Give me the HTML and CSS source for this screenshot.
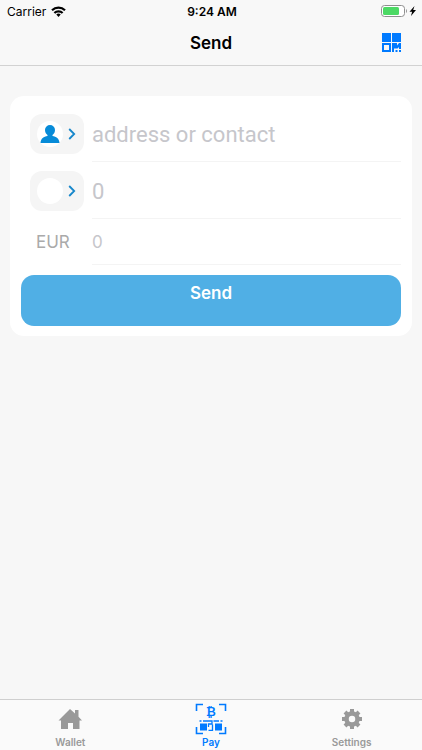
FILE: index.html
```html
<!DOCTYPE html>
<html lang="en">
<head>
<meta charset="utf-8">
<meta name="viewport" content="width=device-width, initial-scale=1">
<title>Send</title>
<link rel="stylesheet" href="styles.css">
</head>
<body>
<header class="top">
  <div class="status">
    <div class="status-side">
      <span>Carrier</span>
      <svg width="15" height="11" viewBox="0 0 15 11" aria-hidden="true">
        <g fill="none" stroke="#000" stroke-width="2.200">
          <path d="M1 4.300a9.300 9.300 0 0 1 13 0"/>
          <path d="M3.400 7a5.800 5.800 0 0 1 8.200 0"/>
        </g>
        <path d="M5.300 8.600a3.100 3.100 0 0 1 4.400 0L7.500 10.900z"/>
      </svg>
    </div>
    <span class="clock">9:24 AM</span>
    <div class="status-side status-end">
      <svg width="36" height="12" viewBox="0 0 36 12" aria-hidden="true">
        <rect x=".5" y=".5" width="23" height="11" rx="3" fill="#fff" stroke="#8f8f8f"/>
        <rect x="2" y="2" width="16" height="8" rx="1.500" fill="#4cd964"/>
        <path d="M25 4v4c1.300-.5 1.300-3.500 0-4z" fill="#8f8f8f"/>
        <path d="M33.500 1l-5 5.800h2.600L30 11l5-6h-2.800z"/>
      </svg>
    </div>
  </div>
  <div class="nav">
    <h1>Send</h1>
    <button class="scan" type="button" aria-label="Scan QR code">
      <svg width="20" height="20" viewBox="0 0 20 20" fill="#007aff">
        <path d="M0 0h9v9H0zM10 0h9v9h-9z"/>
        <path fill-rule="evenodd" d="M0 10h9v9H0zM2 12v5h5v-5z"/>
        <path d="M10 10h5v2.500l2-2.500h2v6h-2v-2l-1.500 1.500H12V19h-2zM13.500 17h2v2h-2zM17 17h2v2h-2z"/>
      </svg>
    </button>
  </div>
</header>

<main>
  <form class="card">
    <div class="row">
      <button class="pick" type="button" aria-label="Choose contact">
        <span class="avatar">
          <svg width="20" height="20" viewBox="0 0 20 20" fill="#078bd8"><path d="M10 1a5 5 0 0 1 5 5c0 2.200-1 4-2.500 5v1c3.800.8 6.500 2 7 7H.5c.5-5 3.200-6.200 7-7v-1C6 10 5 8.200 5 6a5 5 0 0 1 5-5z"/></svg>
        </span>
        <svg width="8" height="12" viewBox="0 0 8 12" fill="none" stroke="#1787cb" stroke-width="1.800"><path d="M1.200 1l5 5-5 5"/></svg>
      </button>
      <input class="field" type="text" placeholder="address or contact" aria-label="Address or contact">
    </div>
    <div class="row">
      <button class="pick" type="button" aria-label="Choose currency">
        <span class="avatar"></span>
        <svg width="8" height="12" viewBox="0 0 8 12" fill="none" stroke="#1787cb" stroke-width="1.800"><path d="M1.200 1l5 5-5 5"/></svg>
      </button>
      <input class="field" type="text" inputmode="decimal" placeholder="0" aria-label="Amount">
    </div>
    <div class="row row-small">
      <label class="unit" for="fiat">EUR</label>
      <input class="field" id="fiat" type="text" inputmode="decimal" placeholder="0">
    </div>
    <button class="send" type="submit">Send</button>
  </form>
</main>

<nav class="tabs">
  <a href="#wallet">
    <svg width="32" height="32" viewBox="0 0 32 32" fill="#999"><path d="M16 6l5 4.500V7h3.500v6.700L28 17.400h-2.500V26H19v-6h-5v6H7v-8.600H4.500z"/></svg>
    <span>Wallet</span>
  </a>
  <a class="active" href="#pay">
    <svg width="32" height="32" viewBox="0 0 32 32">
      <path d="M1.500 8V1.500H8M24 1.500h6.500V8M1.500 24v6.500H8M24 30.500h6.500V24" fill="none" stroke="#007aff" stroke-width="1.600"/>
      <path d="M5 20.500h7v7H5zM20 20.500h7v7h-7zM4.500 17.200h2v1.500h-2zM25.500 17.200h2v1.500h-2z" fill="#007aff"/>
      <path d="M8 18h9v3h-3.500v3M17.500 28v-6.500M18 27.300h-4.500M18.500 18H24" fill="none" stroke="#007aff" stroke-width="1.300"/>
      <text class="coin" x="16" y="13" text-anchor="middle">₿</text>
    </svg>
    <span>Pay</span>
  </a>
  <a href="#settings">
    <svg width="32" height="32" viewBox="0 0 32 32">
      <circle cx="16" cy="16" r="5.500" fill="none" stroke="#999" stroke-width="4.500"/>
      <path d="M16 6v4M16 22v4M6 16h4M22 16h4M9 9l2.500 2.500M20.500 20.500L23 23M23 9l-2.500 2.500M11.500 20.500L9 23" stroke="#999" stroke-width="4"/>
    </svg>
    <span>Settings</span>
  </a>
</nav>
</body>
</html>
```
FILE: styles.css
```css
* {
  box-sizing: border-box;
}

body {
  margin: 0;
  min-height: 100vh;
  display: flex;
  flex-direction: column;
  background: #f7f7f7;
  color: #000;
  font-family: Inter, "Liberation Sans", sans-serif;
}

button {
  border: 0;
  padding: 0;
  font: inherit;
  cursor: pointer;
}

svg {
  display: block;
}

.top {
  border-bottom: 1px solid #d2d2d2;
  background: #f8f8f8;
}

.status,
.nav {
  display: grid;
  grid-template-columns: 1fr auto 1fr;
  align-items: center;
}

.status {
  height: 22px;
  padding: 0 5px 0 7px;
  font-size: 12px;
}

.status-side {
  display: flex;
  align-items: center;
  gap: 5px;
}

.status-end {
  justify-content: flex-end;
}

.clock {
  font-weight: 600;
}

.nav {
  height: 43px;
  padding: 0 20px 1px;
}

h1 {
  grid-column: 2;
  margin: 0;
  font-size: 17px;
  font-weight: 600;
}

.scan {
  justify-self: end;
  background: none;
}

main {
  flex: 1;
  padding: 30px 10px;
}

.card {
  padding: 9px 11px 10px;
  border-radius: 14px;
  background: #fff;
}

.row {
  display: grid;
  grid-template-columns: 54px 1fr;
  align-items: center;
  gap: 8px;
  height: 57px;
  padding-left: 9px;
}

.pick {
  display: flex;
  align-items: center;
  gap: 5px;
  height: 40px;
  padding: 0 7px;
  border-radius: 12px;
  background: #f5f5f5;
}

.avatar {
  display: grid;
  place-items: center;
  width: 26px;
  height: 26px;
  border-radius: 50%;
  background: #fff;
}

.field {
  width: 100%;
  height: 100%;
  padding: 2px 0 0;
  border: 0;
  border-bottom: 1px solid #f4f4f4;
  border-radius: 0;
  outline: 0;
  background: none;
  font-family: Roboto, "Liberation Sans", sans-serif;
  font-size: 22px;
}

.field::placeholder {
  color: #c6c6cb;
  opacity: 1;
}

.row-small {
  height: 46px;
}

.row-small .field {
  padding: 0;
  font-family: Inter, "Liberation Sans", sans-serif;
  font-size: 17px;
}

.unit {
  padding-left: 6px;
  color: #aaa;
  font-size: 17px;
}

.send {
  display: block;
  width: 100%;
  height: 51px;
  margin-top: 10px;
  padding-bottom: 15px;
  border-radius: 13px;
  background: #50afe5;
  color: #fff;
  font-size: 17px;
  font-weight: 600;
}

.tabs {
  display: grid;
  grid-template-columns: repeat(3, 1fr);
  height: 51px;
  border-top: 1px solid #cfcfcf;
  background: #fafafa;
}

.tabs a {
  display: flex;
  flex-direction: column;
  align-items: center;
  padding-top: 3px;
  color: #999;
  font-size: 10px;
  font-weight: 600;
  line-height: 15px;
  text-decoration: none;
}

.tabs .active {
  color: #007aff;
}

.coin {
  fill: #007aff;
  font-family: "DejaVu Sans", sans-serif;
  font-size: 12px;
  font-weight: 700;
}
```
